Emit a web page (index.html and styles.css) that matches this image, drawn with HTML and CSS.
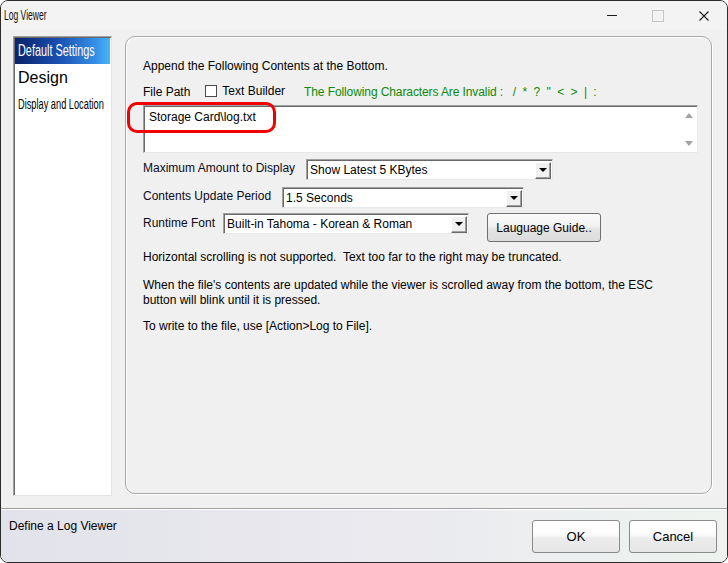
FILE: index.html
```html
<!DOCTYPE html>
<html>
<head>
<meta charset="utf-8">
<link rel="stylesheet" href="styles.css">
</head>
<body>
<div class="window">
  <div class="titlebar">
    <div class="title"><span class="cond">Log Viewer</span></div>
    <div class="controls">
      <span class="ctl min"></span>
      <span class="ctl max"></span>
      <span class="ctl close">
        <svg width="10" height="10" viewBox="0 0 10 10"><path d="M0.5 0.5 L9.5 9.5 M9.5 0.5 L0.5 9.5" stroke="#1a1a1a" stroke-width="1.1" fill="none"/></svg>
      </span>
    </div>
  </div>
  <div class="body">
    <div class="list">
      <div class="item selected"><span class="cond">Default Settings</span></div>
      <div class="item design">Design</div>
      <div class="item small"><span class="cond">Display and Location</span></div>
    </div>
    <div class="panel">
      <div class="line first">Append the Following Contents at the Bottom.</div>
      <div class="pathrow">
        <span>File Path</span>
        <span class="check"></span>
        <span class="tb">Text Builder</span>
        <span class="invalid">The Following Characters Are Invalid :&nbsp;&nbsp; /&nbsp; *&nbsp; ?&nbsp; "&nbsp; &lt;&nbsp; &gt;&nbsp; |&nbsp; :</span>
      </div>
      <div class="textbox">
        <div class="tbtext">Storage Card\log.txt</div>
        <div class="vscroll">
          <span class="arr up"></span>
          <span class="arr down"></span>
        </div>
      </div>
      <div class="row r1">
        <span class="lbl">Maximum Amount to Display</span>
        <div class="select w1"><span class="val">Show Latest 5 KBytes</span><span class="drop"></span></div>
      </div>
      <div class="row r2">
        <span class="lbl">Contents Update Period</span>
        <div class="select w2"><span class="val">1.5 Seconds</span><span class="drop"></span></div>
      </div>
      <div class="row r3">
        <span class="lbl">Runtime Font</span>
        <div class="select w3"><span class="val">Built-in Tahoma - Korean &amp; Roman</span><span class="drop"></span></div>
        <button class="btn guide">Lauguage Guide..</button>
      </div>
      <p class="para p1">Horizontal scrolling is not supported.&nbsp; Text too far to the right may be truncated.</p>
      <p class="para p2">When the file's contents are updated while the viewer is scrolled away from the bottom, the ESC<br>button will blink until it is pressed.</p>
      <p class="para p3">To write to the file, use [Action&gt;Log to File].</p>
    </div>
  </div>
  <div class="footer">
    <div class="hint">Define a Log Viewer</div>
    <div class="buttons">
      <button class="btn big">OK</button>
      <button class="btn big">Cancel</button>
    </div>
  </div>
  <div class="annot"></div>
</div>
</body>
</html>
```
FILE: styles.css
```css
* { box-sizing: border-box; }
html, body { margin: 0; padding: 0; background: #ffffff; }
body { font-family: "Liberation Sans", Arial, sans-serif; font-size: 12px; color: #000; }

.window {
  position: relative;
  width: 728px;
  height: 563px;
  border: 1px solid #2b2b2b;
  border-radius: 8px;
  overflow: hidden;
  background: #f0f0f0;
  display: flex;
  flex-direction: column;
}

.cond {
  display: inline-block;
  transform-origin: 0 50%;
  white-space: nowrap;
}

.titlebar {
  height: 29px;
  flex: none;
  display: flex;
  align-items: center;
  justify-content: space-between;
  background: #f3f3f3;
}
.title {
  font-size: 14px;
  padding-left: 3px;
  margin-top: -1px;
  color: #111;
  width: 120px;
}
.title .cond { transform: scaleX(0.61); }
.controls { display: flex; align-items: center; height: 100%; }
.ctl { display: flex; align-items: center; justify-content: center; width: 46px; height: 100%; }
.min::before { content: ""; display: block; width: 10px; height: 1px; background: #1a1a1a; }
.max::before { content: ""; display: block; width: 10px; height: 10px; border: 1px solid #c4c4c4; }

.body {
  height: 478px;
  flex: none;
  display: flex;
  align-items: flex-start;
  padding: 6px 0 0 12px;
}

.list {
  width: 99px;
  height: 460px;
  background: #fff;
  border: 1px solid;
  border-color: #a0a0a0 #e3e3e3 #e3e3e3 #a0a0a0;
  box-shadow: inset 1px 1px 0 #696969;
  padding: 1px 1px 0 1px;
  overflow: hidden;
}
.item { padding-left: 3px; color: #000; white-space: nowrap; }
.selected {
  height: 26px;
  line-height: 26px;
  color: #fff;
  font-size: 16px;
  background: linear-gradient(to right, #0a2268 0%, #1a4eb0 45%, #3590e6 85%, #48b4f6 100%);
}
.selected .cond { transform: scaleX(0.68); }
.design { font-size: 16px; height: 28px; line-height: 28px; }
.small {
  font-size: 14px;
  height: 24px;
  line-height: 24px;
}
.small .cond { transform: scaleX(0.66); }

.panel {
  margin-left: 13px;
  width: 587px;
  height: 458px;
  border: 1px solid #a8a8a8;
  border-radius: 10px;
  box-shadow: inset 1px 1px 0 #fff, 1px 1px 0 #fff;
  padding: 22px 0 0 17px;
}
.line { height: 14px; line-height: 14px; white-space: nowrap; }

.pathrow {
  margin-top: 11px;
  height: 16px;
  display: flex;
  align-items: center;
  white-space: nowrap;
}
.check {
  width: 12px; height: 12px;
  background: #fff;
  border: 1px solid #4a4a4a;
  margin-left: 15px;
  margin-top: -3px;
}
.tb { margin-left: 5px; margin-top: -3px; }
.invalid { margin-left: 19px; color: #0a8a0a; letter-spacing: -0.1px; }

.textbox {
  margin-top: 5px;
  width: 555px;
  height: 48px;
  background: #fff;
  border: 1px solid;
  border-color: #a0a0a0 #e8e8e8 #e8e8e8 #a0a0a0;
  box-shadow: inset 1px 1px 0 #696969;
  display: flex;
  justify-content: space-between;
}
.tbtext { padding: 4px 0 0 5px; }
.vscroll {
  width: 17px;
  display: flex;
  flex-direction: column;
  justify-content: space-between;
  align-items: center;
  padding: 7px 0 6px 0;
}
.arr { width: 0; height: 0; border-left: 4px solid transparent; border-right: 4px solid transparent; }
.up { border-bottom: 5px solid #a3a3a3; }
.down { border-top: 5px solid #a3a3a3; }

.row { display: flex; align-items: center; white-space: nowrap; }
.r1 { margin-top: 6px; height: 21px; }
.r2 { margin-top: 7px; height: 21px; }
.r3 { margin-top: 5px; height: 28px; align-items: flex-start; }
.r3 .lbl { margin-top: 3px; }
.lbl { color: #0c0c20; margin-top: -3px; }
.select {
  height: 21px;
  background: #fff;
  border: 1px solid;
  border-color: #a0a0a0 #e8e8e8 #e8e8e8 #a0a0a0;
  box-shadow: inset 1px 1px 0 #696969;
  display: flex;
  align-items: center;
  justify-content: space-between;
  padding: 0 1px 0 3px;
}
.w1 { width: 247px; margin-left: 11px; }
.w2 { width: 242px; margin-left: 11px; }
.w3 { width: 246px; margin-left: 8px; }
.val { padding-top: 1px; }
.drop {
  width: 16px;
  height: 17px;
  background: #f0f0f0;
  border: 1px solid;
  border-color: #fff #696969 #696969 #fff;
  box-shadow: inset -1px -1px 0 #a0a0a0;
  display: flex;
  align-items: center;
  justify-content: center;
  margin-top: 1px;
}
.drop::after {
  content: "";
  width: 0; height: 0;
  border-left: 4px solid transparent;
  border-right: 4px solid transparent;
  border-top: 4px solid #000;
  margin-left: -1px;
}

.btn {
  font-family: "Liberation Sans", Arial, sans-serif;
  font-size: 12px;
  color: #000;
  border: 1px solid #707070;
  border-radius: 3px;
  background: linear-gradient(to bottom, #fbfbfb 0%, #f1f1f1 45%, #e4e4e4 55%, #dcdcdc 100%);
  padding: 0;
}
.guide { margin-left: 18px; width: 114px; height: 29px; }

.para { margin: 0; line-height: 15px; white-space: nowrap; }
.p1 { margin-top: 9px; }
.p2 { margin-top: 13px; }
.p3 { margin-top: 11px; }

.footer {
  flex: 1;
  border-top: 1px solid #a0a0a0;
  box-shadow: inset 0 1px 0 #fff;
  background: linear-gradient(to right, #e2e2ea 0%, #eaeaef 55%, #eef3ef 100%);
  display: flex;
  justify-content: space-between;
  align-items: flex-start;
  padding: 11px 10px 0 8px;
}
.hint { margin-top: -1px; }
.buttons { display: flex; gap: 9px; }
.big {
  width: 88px;
  height: 33px;
  font-size: 13px;
  border-color: #8a8a8a;
  background: linear-gradient(to bottom, #ffffff 0%, #fbfbfb 45%, #ececec 55%, #e6e6e6 100%);
}

.annot {
  position: absolute;
  left: 126px;
  top: 101px;
  width: 149px;
  height: 31px;
  border: 3px solid #f20000;
  border-radius: 10px;
}
```
